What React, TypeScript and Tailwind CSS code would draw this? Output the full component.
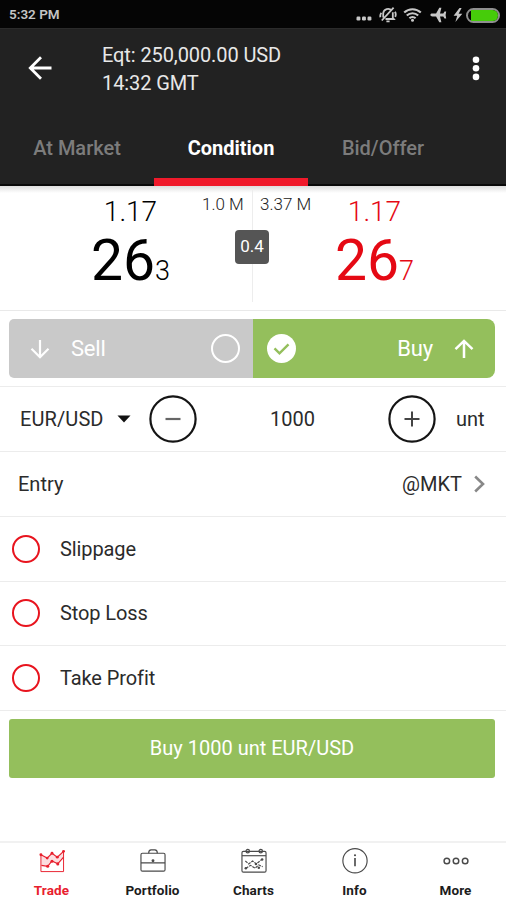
import type { ReactNode } from 'react'

const CONDITIONS = ['Slippage', 'Stop Loss', 'Take Profit']

function StatusBar() {
  return (
    <div className="flex h-7 shrink-0 items-center bg-[#050505] pl-[9px] pr-[6px] pt-[2px]">
      <span className="text-[13.5px] font-semibold leading-none text-[#c4c4c4]">5:32 PM</span>
      <div className="ml-auto flex items-center text-[#c8c8c8]">
        <svg width="16" height="16" viewBox="0 0 16 16" fill="currentColor">
          <rect x="0.5" y="9.5" width="3.9" height="3.9" rx="1.2" />
          <rect x="6" y="9.5" width="3.9" height="3.9" rx="1.2" />
          <rect x="11.5" y="9.5" width="3.9" height="3.9" rx="1.2" />
        </svg>
        <svg
          className="ml-[7px]"
          width="18"
          height="18"
          viewBox="0 0 18 18"
          fill="none"
          stroke="currentColor"
          strokeWidth="1.8"
        >
          <path d="M4.2 11.5V7.2a4.8 4.8 0 0 1 8.6-2.4M13.8 6.2v5.6l1 1.2H6.5M7.4 15.4h3.2M2.8 14.5 14.6 1.6" />
          <path d="M1.4 11.2c-.4-2 0-3.3 1-4.4M16 5.8c1 1.8 1 3.4.2 5" />
        </svg>
        <svg
          className="ml-[6px]"
          width="19"
          height="16"
          viewBox="0 0 19 16"
          fill="none"
          stroke="currentColor"
          strokeWidth="2.1"
        >
          <path d="M1.2 5.6a12 12 0 0 1 16.6 0M3.8 8.6a8.2 8.2 0 0 1 11.4 0M6.4 11.3a4.5 4.5 0 0 1 6.2 0" />
          <circle cx="9.5" cy="13.2" r="1.5" fill="currentColor" stroke="none" />
        </svg>
        <svg className="ml-[8px]" width="17" height="16" viewBox="0 0 17 16" fill="currentColor">
          <path d="M.4 8c0-.9.8-1.4 2-1.4h3.7L9.3.8h2.1L10 6.6h3.3l1.2-2h1.7L15.6 8l.6 3.4h-1.7l-1.2-2H10l1.4 5.8H9.3L6.1 9.4H2.4C1.2 9.4.4 8.9.4 8Z" />
        </svg>
        <svg className="ml-[6px]" width="10" height="14" viewBox="0 0 10 14" fill="currentColor">
          <path d="M6.5 0 .6 7.8h3.6L2.4 14l6.9-8.2H5.6L8.600 0Z" />
        </svg>
        <div className="ml-[3px] flex h-[15px] w-[34px] rounded-full border-2 border-[#8f8f8f] pl-[3px]">
          <div className="w-full rounded-r-full bg-[#46cc0a]" />
        </div>
      </div>
    </div>
  )
}

function Header() {
  return (
    <div className="flex h-[81px] items-start text-[#e8e8e8]">
      <svg
        className="ml-[28px] mt-[27px] shrink-0"
        width="24"
        height="24"
        viewBox="0 0 24 24"
        fill="none"
        stroke="white"
        strokeWidth="2.8"
      >
        <path d="M23.5 12H2M13 1.3 2.3 12 13 22.7" />
      </svg>
      <div className="ml-[50px] mt-[12px] text-xl leading-7 tracking-[-0.1px]">
        <div>Eqt: 250,000.00 USD</div>
        <div>14:32 GMT</div>
      </div>
      <svg className="ml-auto mr-[26px] mt-[27px]" width="8" height="26" viewBox="0 0 8 26" fill="white">
        <circle cx="4" cy="3.7" r="3.3" />
        <circle cx="4" cy="12.2" r="3.3" />
        <circle cx="4" cy="20.9" r="3.3" />
      </svg>
    </div>
  )
}

function Tabs() {
  return (
    <div className="flex h-[76px] text-xl font-medium leading-[76px] text-[#7c7c7c]">
      <button type="button" className="w-[154px]">
        At Market
      </button>
      <button type="button" className="w-[154px] border-b-8 border-[#f01a2b] font-bold text-white">
        Condition
      </button>
      <button type="button" className="w-[150px]">
        Bid/Offer
      </button>
    </div>
  )
}

function Quote({ big, pip }: { big: string; pip: string }) {
  return (
    <>
      <div className="text-[28px] font-light leading-8">1.17</div>
      <div className="text-[57px] leading-[65px]">
        {big}
        <span className="text-[27px] font-light">{pip}</span>
      </div>
    </>
  )
}

function PricePanel() {
  return (
    <div className="relative flex h-[125px] border-b border-[#e9e9e9] bg-[linear-gradient(180deg,#dedede_0px,#ffffff_7px)] pt-[10px]">
      <div className="w-[170px] shrink-0 pl-[91px] text-center text-black">
        <Quote big="26" pip="3" />
      </div>
      <div className="flex flex-1 whitespace-nowrap text-[17px] font-light leading-[17px] text-[#222]">
        <span className="ml-[32px] w-[41px]">1.0 M</span>
        <span className="ml-[17px]">3.37 M</span>
      </div>
      <div className="w-[173px] shrink-0 pr-[90px] text-center text-[#e50914]">
        <Quote big="26" pip="7" />
      </div>
      <div className="absolute left-[252px] top-[4px] h-[112px] w-px bg-[#ededed]" />
      <div className="absolute left-[235px] top-[44px] flex h-[34px] w-[34px] items-center justify-center rounded-[4px] bg-[#555] text-[17px] text-white">
        0.4
      </div>
    </div>
  )
}

function SideSwitch() {
  return (
    <div className="flex h-[76px] border-b border-[#ececec] pb-[8px] pl-[9px] pr-[11px] pt-[8px] text-[22px] text-white">
      <button
        type="button"
        className="flex w-[244px] items-center rounded-l-[5px] bg-[#c9c9c9] pl-[21px] pr-[13px]"
      >
        <svg width="20" height="20" viewBox="0 0 20 20" fill="none" stroke="white" strokeWidth="2.2">
          <path d="M10 1v17M1.5 9.8 10 18.3l8.5-8.5" />
        </svg>
        <span className="ml-[21px] tracking-[-0.2px]">Sell</span>
        <span className="ml-auto h-[29px] w-[29px] rounded-full border-[2.5px] border-white" />
      </button>
      <button
        type="button"
        className="flex flex-1 items-center rounded-r-[8px] bg-[#94bf5c] pl-[14px] pr-[21px]"
      >
        <svg width="29" height="29" viewBox="0 0 29 29" fill="none">
          <circle cx="14.5" cy="14.5" r="14.5" fill="white" />
          <path d="m7.5 14.3 5 5 9-9" stroke="#94bf5c" strokeWidth="2.4" />
        </svg>
        <span className="ml-auto tracking-[-0.2px]">Buy</span>
        <svg
          className="ml-[21px]"
          width="20"
          height="20"
          viewBox="0 0 20 20"
          fill="none"
          stroke="white"
          strokeWidth="2.5"
        >
          <path d="M10 19V2M1.5 10.2 10 1.9l8.5 8.3" />
        </svg>
      </button>
    </div>
  )
}

function RoundButton({ children }: { children: ReactNode }) {
  return (
    <button type="button" className="h-12 w-12 shrink-0">
      <svg width="48" height="48" viewBox="0 0 48 48" fill="none">
        <circle cx="24" cy="24" r="22.6" stroke="#151515" strokeWidth="2.2" />
        {children}
      </svg>
    </button>
  )
}

function AmountRow() {
  return (
    <div className="flex h-[65px] items-center border-b border-[#ececec] pl-[20px] text-xl text-[#2b2b2b]">
      <span className="w-[97px] tracking-[0.1px]">EUR/USD</span>
      <svg width="14" height="8" viewBox="0 0 14 8" fill="#111">
        <path d="M.5.5h13L7 7.5Z" />
      </svg>
      <div className="ml-[18px] flex w-[287px] items-center justify-between">
        <RoundButton>
          <path d="M16.5 24h15" stroke="#666" strokeWidth="2.2" />
        </RoundButton>
        <span>1000</span>
        <RoundButton>
          <path d="M16.5 24h15M24 16.5v15" stroke="#444" strokeWidth="2" />
        </RoundButton>
      </div>
      <span className="ml-[20px]">unt</span>
    </div>
  )
}

function NavItem({
  label,
  active = false,
  children,
}: {
  label: string
  active?: boolean
  children: ReactNode
}) {
  return (
    <button
      type="button"
      className={`flex flex-1 flex-col items-center pt-[5px] ${active ? 'text-[#e8202e]' : ''}`}
    >
      <svg
        className={active ? '' : 'text-[#4a4a4a]'}
        width="28"
        height="27"
        viewBox="0 0 28 27"
        fill="none"
        stroke="currentColor"
        strokeWidth="1.2"
      >
        {children}
      </svg>
      <span className="mt-[6px] leading-5">{label}</span>
    </button>
  )
}

function BottomNav() {
  return (
    <nav className="mt-auto flex h-[59px] border-t-2 border-[#f1f1f1] pl-px text-[13.5px] font-bold tracking-[0.1px] text-[#1c1c1c]">
      <NavItem label="Trade" active>
        <path d="M2.5 8v16.5H26V4" strokeWidth="1" />
        <path d="m2.5 7 6.5 3.5 5-5 5.5 4 6.5-6M3 18l6.5 1 4.5-5.5 6 3 6-7" />
        <path
          d="m2.5 7 6.5 3.5 5-5 5.5 4 6.5-6v6l-6 7-6-3L9.500 19 3 18Z"
          fill="currentColor"
          fillOpacity="0.15"
          stroke="none"
        />
        <g fill="currentColor" stroke="none">
          <circle cx="2.5" cy="7" r="1.5" />
          <circle cx="9" cy="10.5" r="1.5" />
          <circle cx="14" cy="5.5" r="1.5" />
          <circle cx="19.5" cy="9.5" r="1.5" />
          <circle cx="26" cy="3.5" r="1.5" />
          <circle cx="9.5" cy="19" r="1.6" />
          <circle cx="14" cy="13.8" r="1.6" />
          <circle cx="20" cy="16.5" r="1.6" />
        </g>
      </NavItem>
      <NavItem label="Portfolio">
        <rect x="1.5" y="5.5" width="25" height="18.5" rx="1.5" />
        <path d="M9.5 5.5c0-3 1-3.500 2.500-3.500h4c1.500 0 2.500.500 2.500 3.500M1.500 15.500h25" />
        <circle cx="14" cy="13.3" r="1.5" fill="currentColor" stroke="none" />
      </NavItem>
      <NavItem label="Charts">
        <rect x="1.5" y="3.5" width="25" height="21.5" rx="1.5" />
        <path d="M1.5 8h25" />
        <circle cx="7.5" cy="3.3" r="1.8" />
        <circle cx="21" cy="3.3" r="1.8" />
        <path d="m5 13.5 3.5 3 4-3 4 3 6-5M5.500 21l5-3 4.500 3 4-3.500 4 2" strokeDasharray="3 1" />
        <g fill="currentColor" stroke="none">
          <circle cx="5.5" cy="21" r="1.3" />
          <circle cx="16" cy="16.5" r="1.3" />
          <circle cx="19" cy="20.5" r="1.3" />
          <circle cx="22.5" cy="12" r="1.3" />
        </g>
      </NavItem>
      <NavItem label="Info">
        <circle cx="14" cy="13.2" r="12.6" />
        <path d="M14 10.5V19" strokeWidth="1.7" />
        <circle cx="14" cy="7.5" r="1.1" fill="currentColor" stroke="none" />
      </NavItem>
      <NavItem label="More">
        <g strokeWidth="1.5">
          <circle cx="4.5" cy="13.5" r="2.9" />
          <circle cx="14" cy="13.5" r="2.9" />
          <circle cx="23.5" cy="13.5" r="2.9" />
        </g>
      </NavItem>
    </nav>
  )
}

export default function App() {
  return (
    <div className="flex h-[900px] w-[506px] flex-col overflow-hidden bg-white font-[Roboto,sans-serif]">
      <StatusBar />
      <div className="shrink-0 border-t border-[#2b2b2b] bg-[#222] shadow-[inset_0_-2px_0_#0a0a0a]">
        <Header />
        <Tabs />
      </div>
      <PricePanel />
      <SideSwitch />
      <AmountRow />
      <div className="flex h-[65px] items-center border-b border-[#ececec] pl-[18px] pr-[21px] text-xl text-[#2b2b2b]">
        <span>Entry</span>
        <span className="ml-auto">@MKT</span>
        <svg
          className="ml-[12px]"
          width="11"
          height="18"
          viewBox="0 0 11 18"
          fill="none"
          stroke="#888"
          strokeWidth="2.6"
        >
          <path d="M1.2 1.5 9 9l-7.8 7.5" />
        </svg>
      </div>
      {CONDITIONS.map((label) => (
        <div
          key={label}
          className="flex h-[64.5px] items-center border-b border-[#ececec] pl-[12px] text-xl tracking-[-0.1px] text-[#2b2b2b]"
        >
          <span className="mr-[20px] h-[28px] w-[28px] rounded-full border-[2.5px] border-[#e8141e]" />
          {label}
        </div>
      ))}
      <button
        type="button"
        className="ml-[9px] mr-[11px] mt-[8px] h-[59px] rounded-[3px] bg-[#94bf5c] text-xl text-white"
      >
        Buy 1000 unt EUR/USD
      </button>
      <BottomNav />
    </div>
  )
}
